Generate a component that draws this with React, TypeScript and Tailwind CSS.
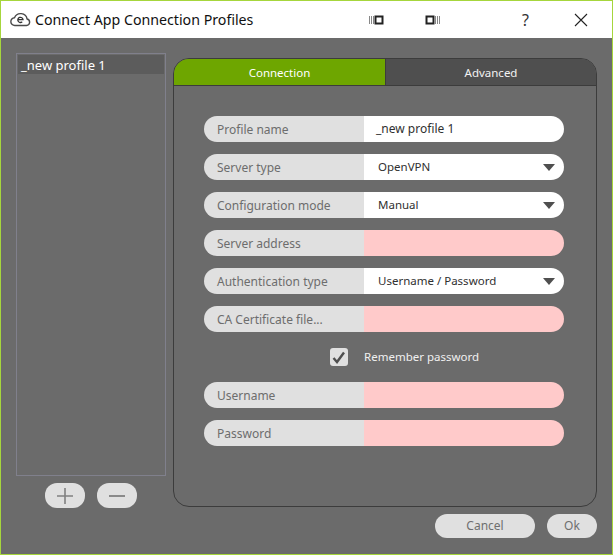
const F = "font-['Noto_Sans','Open_Sans',sans-serif]";

function Row({ label, value, select, invalid }: { label: string; value?: string; select?: boolean; invalid?: boolean }) {
  return (
    <div className="flex h-[26px] w-[360px] overflow-hidden rounded-[13px]">
      <div className="w-[160px] bg-[#e0e0e0] pl-[13px] text-[12px] leading-[27px] text-[#6d6d6d]">{label}</div>
      <div className={`flex flex-1 items-center justify-between pr-[9px] leading-[26px] text-[#303030] ${select ? "pl-[14px] text-[11.5px]" : "pl-[12px] text-[12px]"} ${invalid ? "bg-[#ffcaca]" : "bg-white"}`}>
        <span>{value}</span>
        {select && (
          <svg width="12" height="7" viewBox="0 0 12 7"><path d="M0 0h12L6 7z" fill="#4f4f4f" /></svg>
        )}
      </div>
    </div>
  );
}

function PillButton({ w, children, className = "" }: { w: string; children: React.ReactNode; className?: string }) {
  return <div className={`flex h-6 items-center justify-center rounded-xl bg-[#e0e0e0] text-[12px] text-[#6f6f6f] ${w} ${className}`}>{children}</div>;
}

export default function App() {
  return (
    <div className={`flex h-[555px] w-[613px] flex-col overflow-hidden border border-[#a6d63c] bg-[#6b6b6b] ${F}`}>
      <div className="flex h-[37px] shrink-0 items-center bg-white">
        <svg className="ml-[9px]" width="21" height="15" viewBox="0 0 21 15" fill="none">
          <path d="M5 13.5h11.5a3.3 3.3 0 0 0 .6-6.5 6.6 6.6 0 0 0-12.6-1.3A3.9 3.9 0 0 0 5 13.5z" fill="#fff" stroke="#4a4a4a" strokeWidth="1.4" />
          <path d="M8 7.6h5a2.6 2.6 0 1 0-.8 2.2" stroke="#333" strokeWidth="1.3" />
        </svg>
        <div className="ml-[4px] text-[14.2px] text-[#111]">Connect App Connection Profiles</div>
        <svg className="ml-[116px]" width="15" height="10" viewBox="0 0 15 10">
          <path d="M.5 1v8M2.5 1v8M4.5 1v8" stroke="#888" />
          <rect x="6.5" y="1.5" width="7" height="7" fill="#fff" stroke="#222" strokeWidth="2" />
        </svg>
        <svg className="ml-[41px]" width="15" height="10" viewBox="0 0 15 10">
          <rect x="1.5" y="1.5" width="7" height="7" fill="#fff" stroke="#222" strokeWidth="2" />
          <path d="M10.5 1v8M12.5 1v8M14.5 1v8" stroke="#888" />
        </svg>
        <div className="ml-[79px] w-[12px] text-center text-[16px] text-[#333]">?</div>
        <svg className="ml-[43px]" width="14" height="14" viewBox="0 0 14 14">
          <path d="M1 1l12 12M13 1L1 13" stroke="#222" strokeWidth="1.1" />
        </svg>
      </div>

      <div className="flex flex-1 pl-[15px] pr-[15px] pt-[15px]">
        <div className="flex w-[150px] flex-col items-center">
          <div className="h-[423px] w-full border border-[#80808c] p-px">
            <div className="h-[19px] bg-[#5c5c5c] pl-[3px] text-[13px] leading-[20px] text-white">_new profile 1</div>
          </div>
          <div className="mt-[7px] flex gap-3">
            <PillButton w="w-10" className="h-[25px]">
              <svg width="16" height="16" viewBox="0 0 16 16"><path d="M8 0v16M0 8h16" stroke="#808080" strokeWidth="1.6" /></svg>
            </PillButton>
            <PillButton w="w-10" className="h-[25px]">
              <svg width="16" height="4" viewBox="0 0 16 4"><path d="M0 2h16" stroke="#808080" strokeWidth="1.8" /></svg>
            </PillButton>
          </div>
        </div>

        <div className="ml-[7px] flex w-[424px] flex-col pt-[5px]">
          <div className="h-[449px] overflow-hidden rounded-[16px] border border-[#3c3c3c]">
            <div className="flex h-[27px] border-b border-[#3c3c3c] text-[11.5px] leading-[28px]">
              <div className="w-[211px] bg-[#6ea600] text-center text-white">Connection</div>
              <div className="flex-1 border-l border-[#3c3c3c] bg-[#4f4f4f] text-center text-[#f2f2f2]">Advanced</div>
            </div>
            <div className="flex flex-col gap-3 pl-[30px] pt-[30px]">
              <Row label="Profile name" value="_new profile 1" />
              <Row label="Server type" value="OpenVPN" select />
              <Row label="Configuration mode" value="Manual" select />
              <Row label="Server address" invalid />
              <Row label="Authentication type" value="Username / Password" select />
              <Row label="CA Certificate file..." invalid />
              <div className="flex h-[26px] items-center pl-[126px] text-[11.5px] leading-[26px] text-[#f0f0f0]">
                <div className="flex h-[18px] w-[18px] items-center justify-center rounded-[3px] bg-[#e0e0e0]">
                  <svg width="14" height="13" viewBox="0 0 14 13" fill="none"><path d="M1.5 7l3.5 4 7-9.5" stroke="#4f4f4f" strokeWidth="2.4" /></svg>
                </div>
                <span className="ml-4">Remember password</span>
              </div>
              <Row label="Username" invalid />
              <Row label="Password" invalid />
            </div>
          </div>
          <div className="mt-[7px] flex justify-end gap-3">
            <PillButton w="w-[100px]" className="text-[11.5px]">Cancel</PillButton>
            <PillButton w="w-[50px]">Ok</PillButton>
          </div>
        </div>
      </div>
    </div>
  );
}
